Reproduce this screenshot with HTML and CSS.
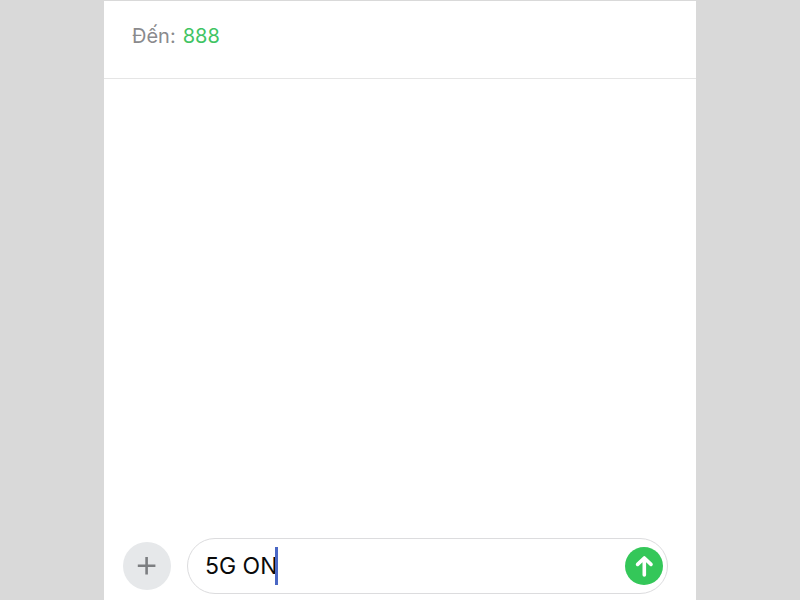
FILE: index.html
```html
<!DOCTYPE html>
<html lang="vi">
<head>
    <meta charset="UTF-8">
    <meta name="viewport" content="width=device-width, initial-scale=1.0">
    <title>5G ON</title>
    <link rel="stylesheet" href="styles.css">
</head>
<body>
    <main class="phone">
        <header class="recipient">
            <span class="recipient-label">Đến:</span>
            <span class="recipient-number">888</span>
        </header>

        <div class="messages"></div>

        <form class="compose">
            <button type="button" class="add-button" aria-label="Thêm">
                <svg width="20" height="20" viewBox="0 0 20 20" fill="none" stroke="#7c7e81" stroke-width="2.6">
                    <path d="M9.6 1v17.6M.8 9.8h17.6"/>
                </svg>
            </button>

            <div class="message-box">
                <input type="text" class="message-input" aria-label="Tin nhắn" value="5G ON">
                <span class="caret"></span>
                <button type="submit" class="send-button" aria-label="Gửi">
                    <svg width="20" height="24" viewBox="0 0 20 24" fill="none" stroke="#fff" stroke-width="3.6" stroke-linecap="round" stroke-linejoin="round">
                        <path d="M10.3 21V4.2M3.6 10.4l6.7-6.4 6.7 6.4"/>
                    </svg>
                </button>
            </div>
        </form>
    </main>
</body>
</html>
```

FILE: styles.css
```css
/* General Body Style */
body {
    margin: 0;
    background-color: #d9d9d9;
    font-family: Inter, 'Liberation Sans', sans-serif;
}

.phone {
    display: flex;
    flex-direction: column;
    box-sizing: border-box;
    width: 74%;
    min-height: 100vh;
    margin: 0 auto;
    background-color: #fff;
    border-top: 1px solid #d9d9d9;
}

/* Recipient row */
.recipient {
    display: flex;
    gap: 7px;
    padding: 21px 28px 28px;
    border-bottom: 1px solid #e5e5e5;
    font-size: 20px;
    line-height: 28px;
}

.recipient-label {
    color: #8a8a8d;
}

.recipient-number {
    color: #3fc463;
}

.messages {
    flex: 1;
}

/* Compose bar */
.compose {
    display: flex;
    align-items: center;
    gap: 16px;
    padding: 0 28px 6px 19px;
}

button {
    display: flex;
    align-items: center;
    justify-content: center;
    flex-shrink: 0;
    padding: 0;
    border: none;
    border-radius: 50%;
    cursor: pointer;
}

.add-button {
    width: 48px;
    height: 48px;
    background-color: #e6e8ea;
}

.message-box {
    position: relative;
    display: flex;
    align-items: center;
    flex: 1;
    box-sizing: border-box;
    height: 56px;
    padding: 0 4px 0 17px;
    border: 1px solid #dcdcde;
    border-radius: 28px;
}

.message-input {
    flex: 1;
    min-width: 0;
    padding: 0;
    border: none;
    outline: none;
    background: none;
    color: #0a0a0a;
    font-family: inherit;
    font-size: 23px;
    line-height: 32px;
}

/* Text cursor over the end of the message */
.caret {
    position: absolute;
    top: 8px;
    left: 87px;
    width: 3px;
    height: 38px;
    background-color: #4a67c4;
}

.send-button {
    width: 38px;
    height: 38px;
    background-color: #34c759;
}
```
